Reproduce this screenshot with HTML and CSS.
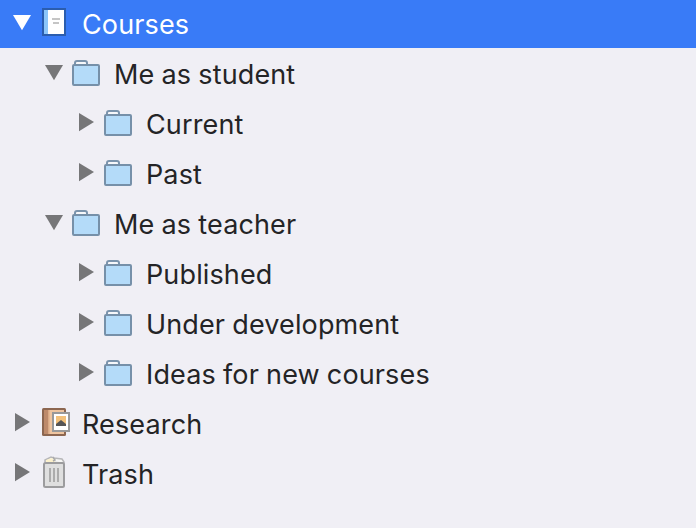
FILE: index.html
```
<!DOCTYPE html>
<html lang="en">
<head>
    <meta charset="UTF-8">
    <meta name="viewport" content="width=device-width, initial-scale=1.0">
    <title>Courses</title>
    <link rel="stylesheet" href="styles.css">
</head>
<body>
    <svg class="sprite" width="0" height="0">
        <symbol id="open" viewBox="0 0 18 32"><path d="M0 7h18l-9 15.2z" fill="currentColor"/></symbol>
        <symbol id="closed" viewBox="0 0 18 32"><path d="M2 5v18.2l15-9.1z" fill="currentColor"/></symbol>
        <symbol id="folder" viewBox="0 0 32 32">
            <path d="M3 7V5q0-2 2-2h8q2 0 2 2v2" fill="#f7f8fb" stroke="#7b94ad" stroke-width="2"/>
            <rect x="1" y="7" width="26" height="20" rx="1" fill="#b4dbf9" stroke="#7690a9" stroke-width="2"/>
        </symbol>
        <symbol id="notebook" viewBox="0 0 32 32">
            <path d="M2 0h24v28H2z" fill="#2b5dae"/>
            <path d="M4 2h4v24H4z" fill="#8bc5fa"/>
            <path d="M8 2h16v24H8z" fill="#fff"/>
            <path d="M12 10h8v2h-8zM13 14h6v2h-6z" fill="#c5c5c5"/>
        </symbol>
        <symbol id="album" viewBox="0 0 32 32">
            <rect x="2" y="0" width="24" height="28" rx="1.5" fill="#8c6650"/>
            <path d="M4 2h4v24H4z" fill="#bd8a6b"/>
            <path d="M8 2h16v24H8z" fill="#efc5a0"/>
            <path d="M8 2h1.5v24H8z" fill="#d9a985"/>
            <path d="M12 4h18v20H12z" fill="#999"/>
            <path d="M14 6h14v16H14z" fill="#fff"/>
            <path d="M16 8h10v10H16z" fill="#f3c17b"/>
            <path d="M16 18v-2l5-4 5 4v2z" fill="#555"/>
        </symbol>
        <symbol id="bin" viewBox="0 0 32 32">
            <path d="M5 4V2l6-3 3 1 8 1 2 3v1z" fill="#f7f7f5" stroke="#b7b7b9" stroke-width="1.5"/>
            <path d="M6 4V2l6-2 3 3v1z" fill="#fcf1cc"/>
            <path d="M13-1l2 3-2 1" fill="none" stroke="#aaa" stroke-width="1.5"/>
            <rect x="4" y="5" width="20" height="24" rx="1.5" fill="#dfdfdf" stroke="#9c9c9e" stroke-width="2"/>
            <path d="M10 10v14M14 10v14M18 10v14" stroke="#acacac" stroke-width="2"/>
        </symbol>
    </svg>

    <ul class="tree">
        <li class="row selected">
            <svg class="arrow"><use href="#open"/></svg>
            <svg class="icon"><use href="#notebook"/></svg>
            <span class="label">Courses</span>
        </li>
        <li class="row level-1">
            <svg class="arrow"><use href="#open"/></svg>
            <svg class="icon"><use href="#folder"/></svg>
            <span class="label">Me as student</span>
        </li>
        <li class="row level-2">
            <svg class="arrow"><use href="#closed"/></svg>
            <svg class="icon"><use href="#folder"/></svg>
            <span class="label">Current</span>
        </li>
        <li class="row level-2">
            <svg class="arrow"><use href="#closed"/></svg>
            <svg class="icon"><use href="#folder"/></svg>
            <span class="label">Past</span>
        </li>
        <li class="row level-1">
            <svg class="arrow"><use href="#open"/></svg>
            <svg class="icon"><use href="#folder"/></svg>
            <span class="label">Me as teacher</span>
        </li>
        <li class="row level-2">
            <svg class="arrow"><use href="#closed"/></svg>
            <svg class="icon"><use href="#folder"/></svg>
            <span class="label">Published</span>
        </li>
        <li class="row level-2">
            <svg class="arrow"><use href="#closed"/></svg>
            <svg class="icon"><use href="#folder"/></svg>
            <span class="label">Under development</span>
        </li>
        <li class="row level-2">
            <svg class="arrow"><use href="#closed"/></svg>
            <svg class="icon"><use href="#folder"/></svg>
            <span class="label">Ideas for new courses</span>
        </li>
        <li class="row">
            <svg class="arrow"><use href="#closed"/></svg>
            <svg class="icon"><use href="#album"/></svg>
            <span class="label">Research</span>
        </li>
        <li class="row">
            <svg class="arrow"><use href="#closed"/></svg>
            <svg class="icon"><use href="#bin"/></svg>
            <span class="label">Trash</span>
        </li>
    </ul>
</body>
</html>
```
FILE: styles.css
```
body {
    margin: 0;
    min-height: 100vh;
    background-color: #f0eff5;
    color: #242426;
    font-family: Inter, "Liberation Sans", sans-serif;
    font-size: 27px;
    letter-spacing: 0.13px;
    word-spacing: -0.6px;
}

.sprite {
    display: block;
}

.tree {
    list-style: none;
    margin: 0;
    padding: 0;
}

.row {
    display: flex;
    align-items: center;
    height: 50px;
    padding-left: 13px;
}

.row.selected {
    height: 48px;
    margin-bottom: 1px;
    background-color: #397bf7;
    color: #ffffff;
}

.level-1 {
    padding-left: 45px;
}

.level-2 {
    padding-left: 77px;
}

.arrow {
    width: 18px;
    height: 32px;
    margin-right: 9px;
    color: #767678;
}

.selected .arrow {
    color: #ffffff;
}

.icon {
    width: 32px;
    height: 32px;
    margin-right: 10px;
    overflow: visible;
}

#bin {
    overflow: visible;
}

.label {
    padding-top: 2px;
    line-height: 32px;
    white-space: nowrap;
}
```
